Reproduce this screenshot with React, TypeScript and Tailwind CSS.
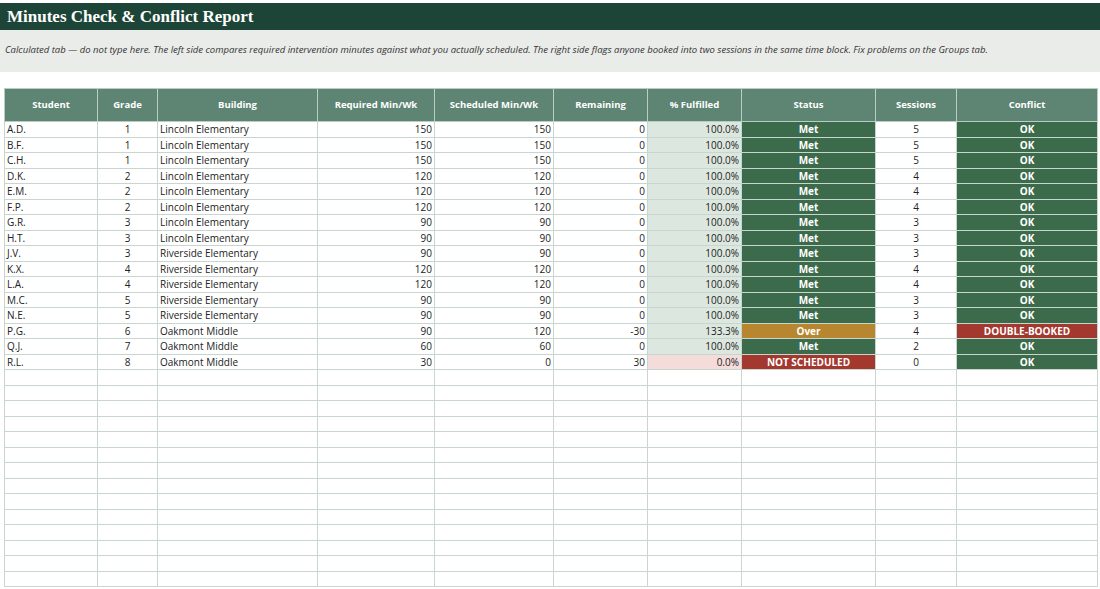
import React from "react";

const rows: [string, number, string, number, number, number, string, string, number, string][] = [
  ["A.D.", 1, "Lincoln Elementary", 150, 150, 0, "100.0%", "Met", 5, "OK"],
  ["B.F.", 1, "Lincoln Elementary", 150, 150, 0, "100.0%", "Met", 5, "OK"],
  ["C.H.", 1, "Lincoln Elementary", 150, 150, 0, "100.0%", "Met", 5, "OK"],
  ["D.K.", 2, "Lincoln Elementary", 120, 120, 0, "100.0%", "Met", 4, "OK"],
  ["E.M.", 2, "Lincoln Elementary", 120, 120, 0, "100.0%", "Met", 4, "OK"],
  ["F.P.", 2, "Lincoln Elementary", 120, 120, 0, "100.0%", "Met", 4, "OK"],
  ["G.R.", 3, "Lincoln Elementary", 90, 90, 0, "100.0%", "Met", 3, "OK"],
  ["H.T.", 3, "Lincoln Elementary", 90, 90, 0, "100.0%", "Met", 3, "OK"],
  ["J.V.", 3, "Riverside Elementary", 90, 90, 0, "100.0%", "Met", 3, "OK"],
  ["K.X.", 4, "Riverside Elementary", 120, 120, 0, "100.0%", "Met", 4, "OK"],
  ["L.A.", 4, "Riverside Elementary", 120, 120, 0, "100.0%", "Met", 4, "OK"],
  ["M.C.", 5, "Riverside Elementary", 90, 90, 0, "100.0%", "Met", 3, "OK"],
  ["N.E.", 5, "Riverside Elementary", 90, 90, 0, "100.0%", "Met", 3, "OK"],
  ["P.G.", 6, "Oakmont Middle", 90, 120, -30, "133.3%", "Over", 4, "DOUBLE-BOOKED"],
  ["Q.J.", 7, "Oakmont Middle", 60, 60, 0, "100.0%", "Met", 2, "OK"],
  ["R.L.", 8, "Oakmont Middle", 30, 0, 30, "0.0%", "NOT SCHEDULED", 0, "OK"],
];

const widths = [93, 60, 160, 117, 119, 94, 94, 134, 81, 141];
const heads = ["Student", "Grade", "Building", "Required Min/Wk", "Scheduled Min/Wk", "Remaining", "% Fulfilled", "Status", "Sessions", "Conflict"];

const td = "border border-[#c9d6cf] h-[15.5px] px-[2px] py-0 leading-[14px] whitespace-nowrap";

export default function App() {
  return (
    <div className="w-[1100px] h-[589px] bg-white overflow-hidden text-[#222] text-[10px]" style={{ fontFamily: "'Open Sans', 'Liberation Sans', sans-serif" }}>
      <div className="pt-[3px]">
        <div className="h-[27px] bg-[#1d4537] flex items-center pl-[7px] text-white font-bold text-[17px]" style={{ fontFamily: "'Liberation Serif', 'DejaVu Serif', serif" }}>
          Minutes Check &amp; Conflict Report
        </div>
        <div className="h-[42px] bg-[#eaecea] pl-[5px] pt-[13px] italic text-[9.5px] text-[#333]">
          Calculated tab — do not type here. The left side compares required intervention minutes against what you actually scheduled. The right side flags anyone booked into two sessions in the same time block. Fix problems on the Groups tab.
        </div>
      </div>
      <table className="mt-[16px] ml-[4px] border-collapse table-fixed" style={{ width: 1093 }}>
        <colgroup>
          {widths.map((w, i) => <col key={i} style={{ width: w }} />)}
        </colgroup>
        <thead>
          <tr>
            {heads.map((h) => (
              <th key={h} className="h-[33px] bg-[#5e8573] text-white font-bold text-[9.5px] border border-[#b9cec3] text-center">{h}</th>
            ))}
          </tr>
        </thead>
        <tbody>
          {rows.map((r) => {
            const zero = r[6] === "0.0%";
            const statusBg = r[7] === "Met" ? "bg-[#3b6b4b]" : r[7] === "Over" ? "bg-[#b8862e]" : "bg-[#a3382f]";
            const confBg = r[9] === "OK" ? "bg-[#3b6b4b]" : "bg-[#a3382f]";
            return (
              <tr key={r[0]}>
                <td className={td}>{r[0]}</td>
                <td className={`${td} text-center`}>{r[1]}</td>
                <td className={td}>{r[2]}</td>
                <td className={`${td} text-right`}>{r[3]}</td>
                <td className={`${td} text-right`}>{r[4]}</td>
                <td className={`${td} text-right`}>{r[5]}</td>
                <td className={`${td} text-right ${zero ? "bg-[#f4dcdb]" : "bg-[#dce8df]"}`}>{r[6]}</td>
                <td className={`${td} text-center font-bold text-white ${statusBg}`}>{r[7]}</td>
                <td className={`${td} text-center`}>{r[8]}</td>
                <td className={`${td} text-center font-bold text-white ${confBg}`}>{r[9]}</td>
              </tr>
            );
          })}
          {Array.from({ length: 14 }).map((_, i) => (
            <tr key={"e" + i}>
              {widths.map((_, j) => <td key={j} className={td}></td>)}
            </tr>
          ))}
        </tbody>
      </table>
    </div>
  );
}
